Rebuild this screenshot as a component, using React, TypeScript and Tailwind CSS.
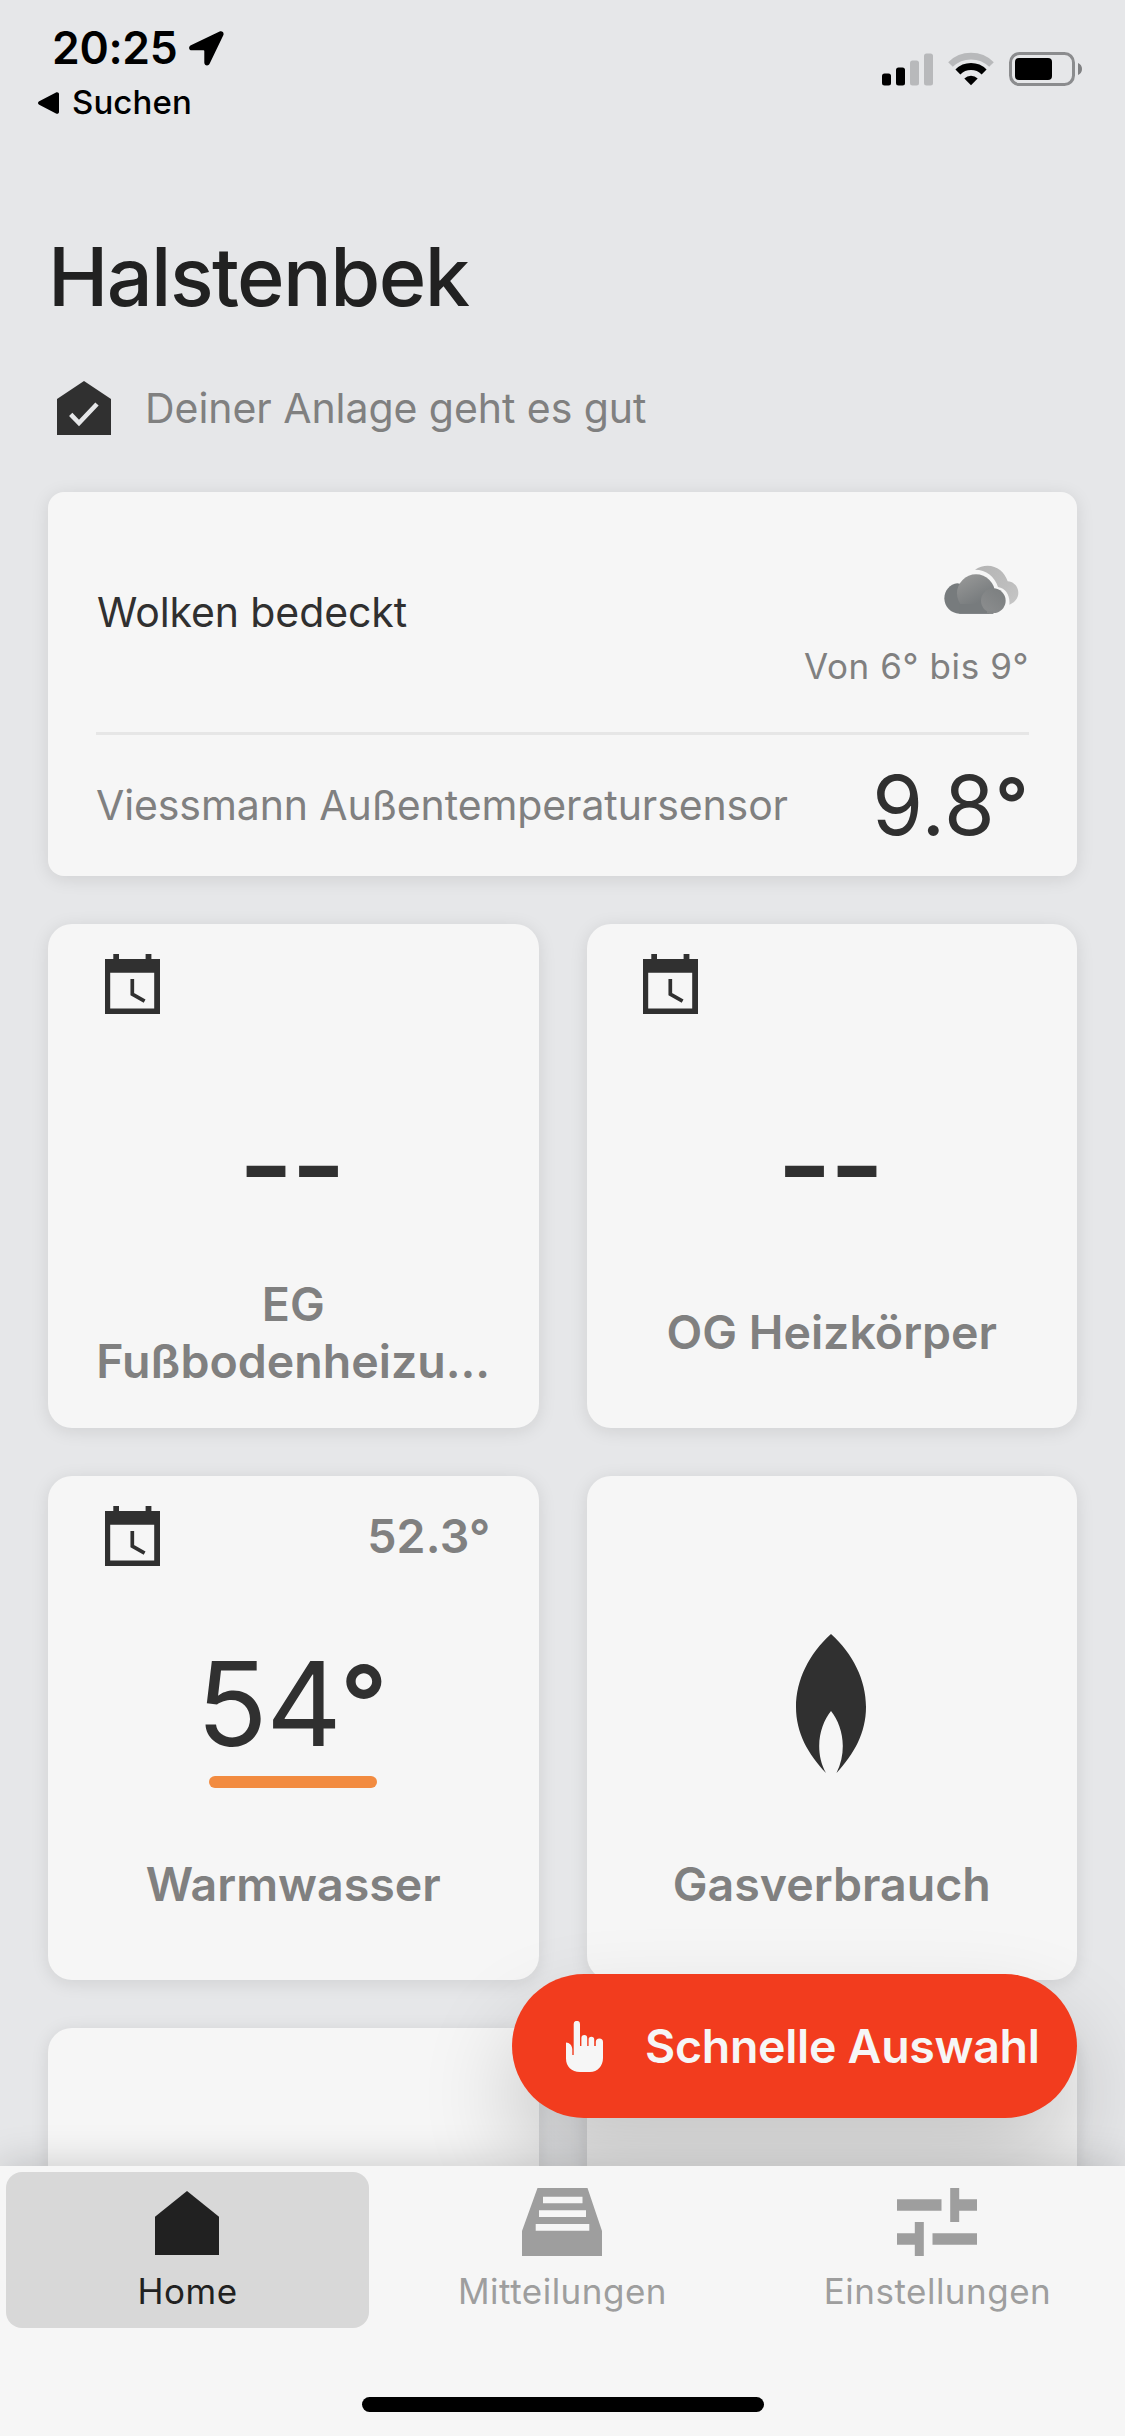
import type { ReactNode } from "react";

// ─── Status bar icons ─────────────────────────────────────────────────────────

function LocationArrow() {
    return (
        <svg width="35" height="35" viewBox="0 0 35 35" className="shrink-0">
            <path
                d="M30.6.6 1.9 14.3C-.9 15.7-.2 19.3 2.8 19.3H14.5c.5 0 .8.3.8.8v11.5c0 3.2 4 4 5.3 1.2L34.3 4.2C35.4 1.7 33.1-.6 30.6.6Z"
                fill="#000"
            />
        </svg>
    );
}

function BackTriangle() {
    return (
        <svg width="21" height="22" viewBox="0 0 21 22" className="shrink-0">
            <path d="M1.2 9.2 18 .4C19.5-.3 21 .5 21 2v18c0 1.5-1.5 2.3-3 1.6L1.2 12.8c-1.6-.8-1.6-2.8 0-3.6Z" />
        </svg>
    );
}

function SignalIcon() {
    return (
        <svg width="51" height="33" viewBox="0 0 51 33">
            <rect x="0" y="20.5" width="9" height="12" rx="2.5" />
            <rect x="14" y="14.5" width="9" height="18" rx="2.5" />
            <rect x="28" y="7.5" width="9" height="25" rx="2.5" fill="#b8b9bb" />
            <rect x="42" y="0.5" width="9" height="32" rx="2.5" fill="#b8b9bb" />
        </svg>
    );
}

function WifiIcon() {
    return (
        <svg width="46" height="34" viewBox="0 0 46 34" fill="none">
            <path d="M2.5 12.5a29.3 29.3 0 0 1 41 0" stroke="#b8b9bb" strokeWidth="6.6" />
            <path d="M9.9 19.9a18.6 18.6 0 0 1 26.2 0" stroke="#000" strokeWidth="7" />
            <path d="M23 33.3 16.3 26.5a9.8 9.8 0 0 1 13.4 0Z" fill="#000" />
        </svg>
    );
}

function BatteryIcon() {
    return (
        <svg width="74" height="34" viewBox="0 0 74 34">
            <rect x="1.5" y="1.5" width="63" height="31" rx="9" fill="none" stroke="#8b8c8e" strokeWidth="3" />
            <rect x="6" y="6" width="37" height="22" rx="4" />
            <path d="M69 11c2.5.8 4 3.2 4 6s-1.5 5.2-4 6Z" fill="#808183" />
        </svg>
    );
}

// ─── App icons ────────────────────────────────────────────────────────────────

function HouseCheckIcon() {
    return (
        <svg width="54" height="54" viewBox="0 0 54 54" className="shrink-0">
            <path d="M27 0 54 18v36H0V18Z" fill="#303030" />
            <path d="m13.7 33.3 8.3 8.7 18-19" fill="none" stroke="#e6e7e9" strokeWidth="4.6" />
        </svg>
    );
}

function CloudsIcon() {
    return (
        <svg width="75" height="49" viewBox="71 73 225 147">
            <defs>
                <linearGradient id="back" x1="0" y1="0" x2="1" y2="1">
                    <stop offset="0" stopColor="#b4b4b4" />
                    <stop offset="0.6" stopColor="#bdbdbd" />
                    <stop offset="1" stopColor="#c6c6c6" />
                </linearGradient>
                <linearGradient id="puff" gradientUnits="userSpaceOnUse" x1="135" y1="110" x2="175" y2="185">
                    <stop offset="0" stopColor="#949595" />
                    <stop offset="1" stopColor="#777b7d" />
                </linearGradient>
                <linearGradient id="side" gradientUnits="userSpaceOnUse" x1="195" y1="200" x2="235" y2="155">
                    <stop offset="0" stopColor="#898b8c" />
                    <stop offset="1" stopColor="#7e8182" />
                </linearGradient>
            </defs>
            <path
                d="M164 87c11-8 25-12 38-12 28 0 51 19 60 47 18 1 32 16 32 34 0 17-11 30-27 36 3-27-10-49-34-53-10-32-35-52-69-52Z"
                fill="url(#back)"
            />
            <path d="M111 128c-22 2-39 22-39 45 0 25 20 46 45 46h102V150Z" fill="#777b7d" />
            <circle cx="167" cy="158" r="57" fill="url(#puff)" />
            <path d="M117 219v-29h90v29Z" fill="#777b7d" />
            <circle cx="219" cy="180" r="37" fill="url(#side)" />
            <path d="M200 211h19v8h-19Z" fill="#868889" />
        </svg>
    );
}

function ScheduleIcon() {
    return (
        <svg width="56" height="60" viewBox="0 0 56 60" className="shrink-0">
            <path
                fillRule="evenodd"
                d="M8.3 0h5.7v5h26.6V0h5.8v5H55v55H0V5h8.3ZM5.2 18.7v35.7h44V18.7Z"
                fill="#303030"
            />
            <path d="M27.3 25v15.2l12.3 7" fill="none" stroke="#303030" strokeWidth="3.7" />
        </svg>
    );
}

function FlameIcon() {
    return (
        <svg width="70" height="139" viewBox="0 0 70 139">
            <path
                d="M35 0C57 20 70 46 70 73c0 26-12 47-29.5 66C45 130 46.8 121 46.8 112 46.8 98 42 86 35 77 28 86 23.2 98 23.2 112c0 9 1.8 18 6.8 27C12 120 0 99 0 73 0 46 13 20 35 0Z"
                fill="#303030"
            />
        </svg>
    );
}

function HandIcon() {
    return (
        <svg width="37" height="51" viewBox="0 0 37 51" className="shrink-0">
            <path
                d="M0 21.5c3.5 0 6.3 3 6.3 7V34H7.7V3a3.1 3.1 0 0 1 6.3 0v22h1.4v-8a2.9 2.9 0 0 1 5.8 0v8h1.4v-6.5a2.8 2.8 0 0 1 5.6 0V25h1.6v-4a2.9 2.9 0 0 1 7.2 0v16c0 8-5.5 14-13 14h-10C5.5 51 0 45.5 0 37.5Z"
                fill="#f6f6f6"
            />
        </svg>
    );
}

function HomeIcon() {
    return (
        <svg width="64" height="68" viewBox="0 0 64 68">
            <path d="M32 3 64 28.7V67H0V28.7Z" fill="#212121" />
        </svg>
    );
}

function InboxIcon() {
    return (
        <svg width="80" height="68" viewBox="0 0 80 68">
            <path
                fillRule="evenodd"
                d="M15.5 0h50L80 43v25H0V43ZM21 8.7v6.6h39.5V8.7ZM17 22.3V29h47v-6.7ZM13.7 36v6.7h53.6V36Z"
                fill="#9e9e9e"
            />
        </svg>
    );
}

function SlidersIcon() {
    return (
        <svg width="80" height="68" viewBox="0 0 80 68">
            <path
                d="M0 11.2h44.5v11.5H0ZM53.2 0h9v11.2H80v11.5H62.2V34h-9ZM17.8 34h9v34h-9V56.8H0V45.3h17.8ZM35.5 45.3H80v11.5H35.5Z"
                fill="#9e9e9e"
            />
        </svg>
    );
}

// ─── Tiles ────────────────────────────────────────────────────────────────────

const CARD = "bg-[#f6f6f6] shadow-[0_3px_18px_rgba(0,0,0,0.1)]";

// Large readings carry a smaller, heavier degree ring than the digits
function Degree() {
    return <span className="align-[0.07em] text-[0.88em] leading-none font-semibold">°</span>;
}

function Tile({
    scheduled,
    current,
    label,
    children,
}: {
    scheduled?: boolean;
    current?: string;
    label?: ReactNode;
    children?: ReactNode;
}) {
    return (
        <div className={`${CARD} flex h-[504px] flex-col rounded-3xl px-12 pt-[30px]`}>
            <div className="flex h-[60px] items-center justify-between pl-[8.5px]">
                {scheduled && <ScheduleIcon />}
                {current && (
                    <span className="pt-0.5 text-[46.5px] font-semibold tracking-[0.2px] text-[#808080]">
                        {current}
                    </span>
                )}
            </div>
            <div className="flex h-[222px] flex-col items-center justify-end">{children}</div>
            <div className="flex flex-1 items-center justify-center pt-px text-center text-[46.5px] leading-[57px] font-semibold text-[#808080]">
                {label}
            </div>
        </div>
    );
}

function NoValue() {
    return (
        <span className="mr-[5px] mb-[11px] text-[120px] leading-[120px] font-medium tracking-[-3px] text-[#303030]">
            --
        </span>
    );
}

// ─── Bottom navigation ────────────────────────────────────────────────────────

function NavItem({ icon, label, active }: { icon: ReactNode; label: string; active?: boolean }) {
    return (
        <div className="flex-1 p-1.5">
            <div
                className={`flex h-[156px] flex-col items-center rounded-2xl pt-4 text-[35px] leading-[44px] ${
                    active ? "bg-[#d8d8d8] text-[#212121]" : "text-[#9e9e9e]"
                }`}
            >
                <div className="pr-px">{icon}</div>
                <span className="mt-[13px] tracking-[0.5px]">{label}</span>
            </div>
        </div>
    );
}

// ─── Page ─────────────────────────────────────────────────────────────────────

export default function App() {
    return (
        <div className="relative flex h-[2436px] w-[1125px] flex-col overflow-hidden bg-[#e6e7e9] font-['Inter',sans-serif]">
            <header className="flex h-[228px] shrink-0 justify-between pt-5 pr-[42px] pl-[38px] text-black">
                <div>
                    <div className="flex h-14 items-center gap-3 pl-[14px] text-[44.5px] font-semibold">
                        <span className="tracking-[-0.3px]">20:25</span>
                        <LocationArrow />
                    </div>
                    <div className="mt-[7px] flex h-10 items-center gap-[13px] text-[33px] font-medium">
                        <BackTriangle />
                        <span className="tracking-[0.1px]">Suchen</span>
                    </div>
                </div>
                <div className="mt-8 flex h-[34px] items-end gap-[15px]">
                    <SignalIcon />
                    <WifiIcon />
                    <BatteryIcon />
                </div>
            </header>

            <main className="flex-1 overflow-hidden px-12">
                <h1 className="h-24 text-[81px] leading-[98px] font-[550] tracking-[-1.6px] text-[#212121]">
                    Halstenbek
                </h1>
                <div className="mt-[57px] flex h-[54px] items-center gap-[34px] pl-[9px]">
                    <HouseCheckIcon />
                    <span className="pt-0.5 text-[41px] tracking-[-0.05px] text-[#808080]">
                        Deiner Anlage geht es gut
                    </span>
                </div>

                <section className={`${CARD} mt-[57px] rounded-2xl px-12`}>
                    <div className="flex h-60 items-center justify-between">
                        <span className="pt-0.5 pl-px text-[41px] tracking-[-0.1px] text-[#303030]">
                            Wolken bedeckt
                        </span>
                        <div className="flex flex-col items-end pt-[29px]">
                            <div className="pr-[10px]">
                                <CloudsIcon />
                            </div>
                            <span className="mt-[29px] text-[35px] leading-[46px] tracking-[0.6px] text-[#808080]">
                                Von 6° bis 9°
                            </span>
                        </div>
                    </div>
                    <div className="h-[3px] bg-[#e6e6e6]" />
                    <div className="flex h-[141px] items-center justify-between">
                        <span className="text-[41px] tracking-[-0.1px] text-[#808080]">
                            Viessmann Außentemperatursensor
                        </span>
                        <span className="text-[82px] leading-none tracking-[0.6px] text-[#303030]">
                            9.8
                            <Degree />
                        </span>
                    </div>
                </section>

                <section className="mt-12 grid grid-cols-2 gap-12">
                    <Tile
                        scheduled
                        label={
                            <span>
                                EG
                                <br />
                                Fußbodenheizu...
                            </span>
                        }
                    >
                        <NoValue />
                    </Tile>
                    <Tile scheduled label="OG Heizkörper">
                        <NoValue />
                    </Tile>
                    <Tile scheduled current="52.3°" label="Warmwasser">
                        <span className="mr-1 text-[117px] leading-[120px] tracking-[-1.5px] text-[#303030]">
                            54
                            <Degree />
                        </span>
                        <div className="mt-3 h-3 w-[168px] rounded-full bg-[#f28b40]" />
                    </Tile>
                    <Tile label="Gasverbrauch">
                        <div className="mr-px mb-[15px]">
                            <FlameIcon />
                        </div>
                    </Tile>
                    <Tile />
                    <Tile />
                </section>
            </main>

            {/* Floating quick action */}
            <button className="absolute top-[1974px] right-12 flex h-36 w-[565px] items-center rounded-full bg-[#f23c1e] pl-[54px] text-[#f6f6f6] shadow-[0_48px_96px_rgba(0,0,0,0.2)]">
                <HandIcon />
                <span className="ml-[42px] pt-px text-[46.5px] font-semibold tracking-[-0.3px] whitespace-nowrap">
                    Schnelle Auswahl
                </span>
            </button>

            <nav className="relative flex h-[270px] shrink-0 flex-col justify-between bg-[#f6f6f6] pb-6 shadow-[0_-3px_36px_rgba(0,0,0,0.17)]">
                <div className="flex">
                    <NavItem active icon={<HomeIcon />} label="Home" />
                    <NavItem icon={<InboxIcon />} label="Mitteilungen" />
                    <NavItem icon={<SlidersIcon />} label="Einstellungen" />
                </div>
                <div className="mx-auto h-[15px] w-[402px] rounded-full bg-black" />
            </nav>
        </div>
    );
}
